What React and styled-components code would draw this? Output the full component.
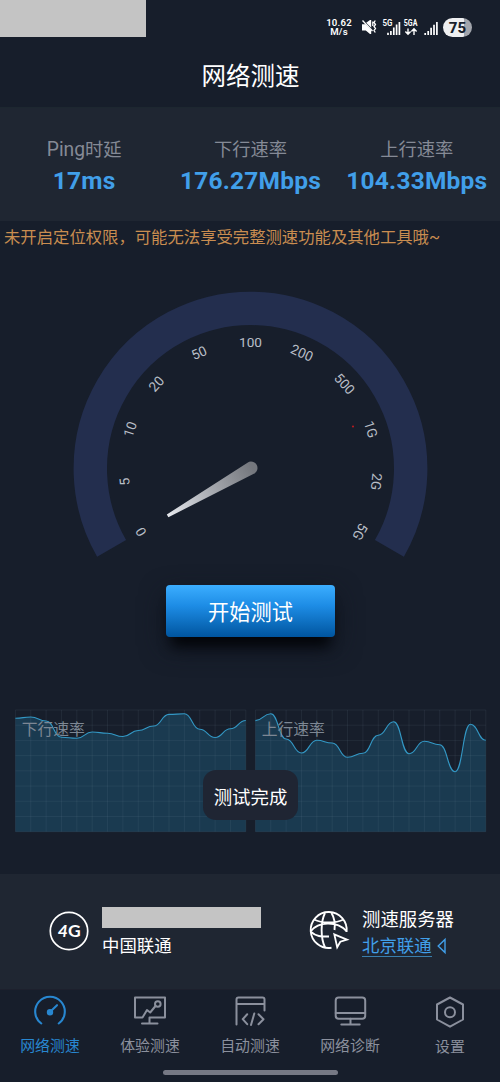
import React from 'react';
import styled, { createGlobalStyle, ThemeProvider } from 'styled-components';

const theme = {
  colors: {
    page: '#171e2b',
    panel: '#1f2632',
    blue: '#419fe9',
    gray: '#858a96',
    redacted: '#c4c4c4',
  },
  fonts: {
    body: 'Roboto, "Noto Sans CJK SC", sans-serif',
  },
};

const GlobalStyle = createGlobalStyle`
  * { box-sizing: border-box; }
  body {
    margin: 0;
    background: #171e2b;
  }
`;

const Screen = styled.div`
  display: flex;
  flex-direction: column;
  width: 500px;
  height: 1082px;
  overflow: hidden;
  background: ${(props) => props.theme.colors.page};
  color: #fff;
  font-family: ${(props) => props.theme.fonts.body};
  white-space: nowrap;

  svg {
    display: block;
    flex: none;
    overflow: visible;
  }
`;

const StatusBar = styled.div`
  display: flex;
  justify-content: space-between;
  height: 37px;
`;

const Redacted = styled.div`
  width: ${(props) => props.$width}px;
  height: ${(props) => props.$height}px;
  background: ${(props) => props.theme.colors.redacted};
`;

const StatusIcons = styled.div`
  display: flex;
  align-items: flex-start;
  padding: 18px 28px 0 0;
`;

const NetSpeed = styled.div`
  width: 26px;
  margin-right: 10px;
  font-size: 9.6px;
  font-weight: 600;
  line-height: 9px;
  letter-spacing: 0.2px;
  text-align: center;
`;

const Battery = styled.div`
  width: 29px;
  height: 19px;
  border-radius: 10px;
  background: linear-gradient(90deg, #eeeff1 74%, #a2a5ac 74%);
  color: #171e2b;
  font-size: 15px;
  font-weight: 800;
  line-height: 20px;
  text-align: center;
`;

const Header = styled.h1`
  height: 70px;
  margin: 0;
  padding: 21px 0 0 1px;
  font-size: 24.5px;
  font-weight: 400;
  line-height: 38px;
  text-align: center;
`;

const Stats = styled.div`
  display: grid;
  grid-template-columns: repeat(3, 1fr);
  height: 114px;
  padding: 28px 0 0 1px;
  background: ${(props) => props.theme.colors.panel};
  border-top: 1px solid #1d2730;
  text-align: center;
`;

const StatLabel = styled.div`
  color: ${(props) => props.theme.colors.gray};
  font-size: 18.3px;
  line-height: 27px;
`;

const Latin = styled.span`
  font-size: 19.3px;
`;

const StatValue = styled.div`
  margin: 2px -10px 0;
  color: ${(props) => props.theme.colors.blue};
  font-size: 24.5px;
  font-weight: 700;
  line-height: 32px;
  letter-spacing: 0.2px;
`;

const Notice = styled.div`
  height: 63px;
  padding: 5px 0 0 4px;
  color: #c98d50;
  font-size: 16.35px;
  line-height: 24px;
`;

const Gauge = styled.div`
  display: flex;
  justify-content: center;
  height: 301px;
`;

const StartButton = styled.button`
  flex: none;
  align-self: center;
  width: 169px;
  height: 52px;
  margin: 0 0 73px 1px;
  padding: 3px 0 0;
  border: 0;
  border-radius: 4px;
  background: linear-gradient(#3caeff, #1d8ce5 40%, #00559f);
  box-shadow: 0 15px 13px -6px #030509, 0 10px 26px #10151f;
  color: #fff;
  font-family: inherit;
  font-size: 21.2px;
  line-height: 49px;
`;

const Charts = styled.div`
  position: relative;
  display: flex;
  gap: 10px;
  height: 164px;
  padding-left: 15px;
`;

const ToastMessage = styled.div`
  position: absolute;
  top: 60px;
  left: 203px;
  width: 95px;
  height: 50px;
  border-radius: 13px;
  background: #1f2533;
  font-size: 18.4px;
  line-height: 55px;
  text-align: center;
`;

const ServerInfo = styled.div`
  display: flex;
  height: 115px;
  padding: 33px 0 0 49px;
  background: ${(props) => props.theme.colors.panel};
`;

const Carrier = styled.div`
  display: flex;
  gap: 13px;
  width: 260px;
`;

const Server = styled.div`
  display: flex;
  gap: 13px;
`;

const InfoText = styled.div`
  font-size: ${(props) => props.$size || 17.4}px;
  line-height: 26px;
`;

const CarrierName = styled(InfoText)`
  margin-top: 5px;
`;

const ServerLink = styled.div`
  display: flex;
  align-items: center;
  gap: 5px;
  margin-top: 1px;
  color: ${(props) => props.theme.colors.blue};
  font-size: 17.4px;

  span {
    height: 23px;
    border-bottom: 1px solid #397eae;
    line-height: 24px;
  }
`;

const TabBar = styled.nav`
  display: grid;
  grid-template-columns: repeat(5, 1fr);
  height: 81px;
  padding-top: 6px;
  border-top: 1px solid #1d202d;
`;

const Tab = styled.div`
  display: flex;
  flex-direction: column;
  align-items: center;
  color: ${(props) => (props.$active ? '#2887d0' : '#8b909d')};
  font-size: 14.9px;
  line-height: 24px;

  svg {
    margin-bottom: 4px;
  }

  &:last-child {
    line-height: 26px;
  }
`;

const HomeIndicator = styled.div`
  flex: none;
  width: 175px;
  height: 5px;
  margin-left: 163px;
  border-radius: 3px;
  background: #767985;
`;

const stats = [
  { label: <><Latin>Ping</Latin>时延</>, value: '17ms' },
  { label: '下行速率', value: '176.27Mbps' },
  { label: '上行速率', value: '104.33Mbps' },
];

const scale = ['0', '5', '10', '20', '50', '100', '200', '500', '1G', '2G', '5G'];

const download = [8.3, 7, 11, 27.3, 28.3, 22, 23.3, 26.5, 20.5, 16, 4.4, 3.8, 19.3, 27.5, 18.8, 10.5];
const upload = [10.6, 3.8, 29, 43, 30.3, 33, 47.3, 43.3, 25.3, 11.8, 43.7, 31.3, 34.8, 61.7, 14.3, 30.3];

const chartWidth = 230.4;
const chartHeight = 121.7;

function curve(values) {
  const step = chartWidth / (values.length - 1);
  let d = `M0 ${values[0]}`;
  for (let i = 1; i < values.length; i++) {
    const mid = (i - 0.5) * step;
    d += ` C${mid} ${values[i - 1]} ${mid} ${values[i]} ${i * step} ${values[i]}`;
  }
  return d;
}

function SpeedChart({ title, values }) {
  const line = curve(values);
  return (
    <svg width="230" height="122" viewBox="-0.4 0 230 122">
      <path d={`${line} V${chartHeight} H0 Z`} fill="#1a3a50" />
      <g stroke="#88a0b5" strokeOpacity="0.1">
        {Array.from({ length: 16 }, (_, i) => (
          <path key={i} d={`M${(i * chartWidth) / 15} 0 V${chartHeight}`} />
        ))}
        {Array.from({ length: 9 }, (_, i) => (
          <path key={i} d={`M0 ${(i * chartHeight) / 8} H${chartWidth}`} />
        ))}
      </g>
      <path d={line} fill="none" stroke="#3398c5" strokeWidth="1.1" />
      <text x="6.3" y="24.6" fontSize="15.8" fill="#7d8794">{title}</text>
    </svg>
  );
}

function SpeedGauge() {
  return (
    <svg width="356" height="270" viewBox="72 284 356 270">
      <defs>
        <linearGradient id="needle" x1="168" y1="516" x2="252" y2="467" gradientUnits="userSpaceOnUse">
          <stop offset="0" stopColor="#e6e8ed" />
          <stop offset="0.5" stopColor="#a9acb2" />
          <stop offset="1" stopColor="#74777d" />
        </linearGradient>
      </defs>
      <path d="M111.6 548.4 A160.2 160.2 0 1 1 389.4 548.4" fill="none" stroke="#232e4e" strokeWidth="33.4" />
      {scale.map((label, i) => (
        <text
          key={label}
          x="250.5"
          y="346.7"
          fontSize="13.6"
          fill="#b9bec7"
          textAnchor="middle"
          transform={`rotate(${-120 + i * 24} 250.5 468.5)`}
        >
          {label}
        </text>
      ))}
      <path d="M166.8 514.5 L247.5 462.7 A6.4 6.4 0 1 1 253.8 473.8 L168.4 517.2 Z" fill="url(#needle)" />
      <circle cx="353" cy="426.5" r="1.1" fill="#b51b20" />
    </svg>
  );
}

function PhoneStatus() {
  return (
    <StatusIcons>
      <NetSpeed>
        <div>10.62</div>
        <div>M/s</div>
      </NetSpeed>
      <svg width="81" height="19" viewBox="361 18 81 19">
        {/* muted speaker with vibration marks */}
        <path d="M361 24.2 H364.5 L370.2 30 V34 L369 34 L364.8 30.4 H361 Z M365.2 22.8 L369 20 H370.2 V27.8 Z" fill="#fff" />
        <path d="M361.5 20.5 L371.5 31" stroke="#fff" strokeWidth="1.3" />
        <path d="M371.8 21.5 V26 M374.3 20.5 L373 22.5 L374.5 24.5 L373 26.5 L374.5 28.5 L373 30.5 L374.3 32.5" fill="none" stroke="#fff" strokeWidth="1.3" />
        <text x="381.5" y="26.2" fontSize="8.6" fontWeight="600" textLength="10" lengthAdjust="spacingAndGlyphs" fill="#fff">5G</text>
        <path d="M387 35 V32.7 M389.9 35 V31 M392.8 35 V27.5 M395.6 35 V24.5 M398.4 35 V22" stroke="#fff" strokeWidth="1.7" />
        <text x="402.8" y="26.4" fontSize="8.6" fontWeight="700" textLength="13.6" lengthAdjust="spacingAndGlyphs" fill="#fff">5GA</text>
        <path d="M407 28.5 V34 M404.4 31.5 L407 34.3 L409.6 31.5 M413 35 V29 M410.4 31.5 L413 28.7 L415.6 31.5" fill="none" stroke="#fff" strokeWidth="1.4" />
        <path d="M424.2 35 V33 M427.2 35 V31 M430.1 35 V27.7 M433 35 V24.7 M435.9 35 V22" stroke="#fff" strokeWidth="1.7" />
      </svg>
      <Battery>75</Battery>
    </StatusIcons>
  );
}

function TabIcon({ name }) {
  const shapes = {
    speed: (
      <>
        <path d="M9.3 31 A14.8 14.8 0 1 1 26.7 31" strokeWidth="2.1" />
        <path d="M18 19.5 L25 12.7" strokeWidth="2.1" />
        <circle cx="18" cy="19.8" r="2.2" fill="currentColor" />
      </>
    ),
    experience: (
      <>
        <path d="M22.8 5 H3 V25 H10.5 L15 17.5 L18.2 20 L23.5 13.5 M22.8 5 H33 V25 H17.5 V31 M10 31 H25.5" />
        <circle cx="25.8" cy="11.5" r="2.8" />
      </>
    ),
    auto: (
      <>
        <path d="M4.5 32 V7 Q4.5 5 6.5 5 H30.5 Q32.5 5 32.5 7 V18 M4.5 11.5 H32.5 M15.2 21.8 L10.7 26.7 L15.2 31.7 M22.3 21 L19 32.5 M26.5 21.8 L31.5 26.7 L26.5 31.7" />
      </>
    ),
    diagnosis: (
      <>
        <rect x="3.7" y="5" width="29.5" height="21.3" rx="3" />
        <path d="M3.7 20.5 H33.2 M18.5 26.3 V32 M9.3 32 H27.7" />
      </>
    ),
    settings: (
      <>
        <path d="M18 5 L31 12 V27 L18 34.2 L5 27 V12 Z" />
        <circle cx="18" cy="19.7" r="5" />
      </>
    ),
  };
  return (
    <svg width="36" height="34" viewBox="0 3.5 36 34" fill="none" stroke="currentColor" strokeWidth="2" strokeLinejoin="round" strokeLinecap="round">
      {shapes[name]}
    </svg>
  );
}

const tabs = [
  { icon: 'speed', label: '网络测速' },
  { icon: 'experience', label: '体验测速' },
  { icon: 'auto', label: '自动测速' },
  { icon: 'diagnosis', label: '网络诊断' },
  { icon: 'settings', label: '设置' },
];

function App() {
  return (
    <ThemeProvider theme={theme}>
      <GlobalStyle />
      <Screen>
        <StatusBar>
          <Redacted $width={145.5} $height={37} />
          <PhoneStatus />
        </StatusBar>
        <Header>网络测速</Header>
        <Stats>
          {stats.map((stat) => (
            <div key={stat.value}>
              <StatLabel>{stat.label}</StatLabel>
              <StatValue>{stat.value}</StatValue>
            </div>
          ))}
        </Stats>
        <Notice>未开启定位权限，可能无法享受完整测速功能及其他工具哦~</Notice>
        <Gauge>
          <SpeedGauge />
        </Gauge>
        <StartButton>开始测试</StartButton>
        <Charts>
          <SpeedChart title="下行速率" values={download} />
          <SpeedChart title="上行速率" values={upload} />
          <ToastMessage>测试完成</ToastMessage>
        </Charts>
        <ServerInfo>
          <Carrier>
            <svg width="40" height="48" viewBox="0 0 40 48">
              <circle cx="20" cy="24" r="18.7" fill="none" stroke="#fff" strokeWidth="1.7" />
              <text y="30.3" fontSize="17.5" fontWeight="700" fontFamily="Lato, sans-serif" fill="#fff">
                <tspan x="8.7" fontStyle="italic">4</tspan>
                <tspan x="19">G</tspan>
              </text>
            </svg>
            <div>
              <Redacted $width={159} $height={21} />
              <CarrierName>中国联通</CarrierName>
            </div>
          </Carrier>
          <Server>
            <svg width="40" height="48" viewBox="309 907 40 48" fill="none" stroke="#fff" strokeWidth="1.9">
              <path d="M346.6 932 A18 18 0 1 0 331.5 947.8" />
              <path d="M325 913 C320.5 922 320.5 938 325 947.5 M331.5 913 C334.5 918 335.3 924 334.5 930 M314 919.5 C322 923.5 336 923.5 343.5 919.5 M311 932 C317 937 322 936.5 329 936.5 M311 931 C318 922 336 920 346.5 931" />
              <path d="M334.3 934.3 L347 939.7 L340.3 941.7 L337.2 947.3 Z" strokeWidth="1.8" />
            </svg>
            <div>
              <InfoText $size={18.4}>测速服务器</InfoText>
              <ServerLink>
                <span>北京联通</span>
                <svg width="9" height="16" viewBox="0 0 9 16">
                  <path d="M8 1.5 V14.5 L1.2 8 Z" fill="none" stroke="currentColor" strokeWidth="1.4" />
                </svg>
              </ServerLink>
            </div>
          </Server>
        </ServerInfo>
        <TabBar>
          {tabs.map((tab, i) => (
            <Tab key={tab.icon} $active={i === 0}>
              <TabIcon name={tab.icon} />
              {tab.label}
            </Tab>
          ))}
        </TabBar>
        <HomeIndicator />
      </Screen>
    </ThemeProvider>
  );
}

export default App;
